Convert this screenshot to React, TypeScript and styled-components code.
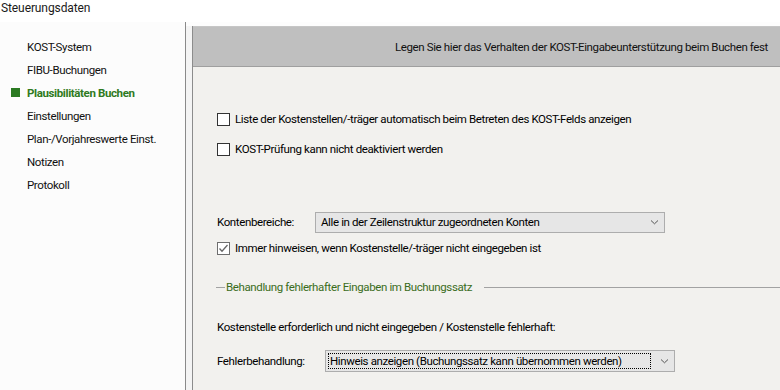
import React from "react";
import styled, { createGlobalStyle } from "styled-components";

const Global = createGlobalStyle`
  html, body { margin: 0; padding: 0; background: #ffffff; }
  body { font-family: Roboto, "Liberation Sans", Arial, sans-serif; }
  * { box-sizing: border-box; }
`;

const Window = styled.div`
  width: 780px;
  height: 390px;
  display: flex;
  flex-direction: column;
  background: #ffffff;
  overflow: hidden;
  color: #000;
  font-size: 11.5px;
  letter-spacing: -0.38px;
`;

const TitleBar = styled.div`
  height: 22px;
  display: flex;
  align-items: center;
  padding-left: 1px;
  padding-bottom: 6px;
  font-size: 12px;
  letter-spacing: -0.1px;
  color: #1a1a1a;
  background: #ffffff;
`;

const Body = styled.div`
  flex: 1;
  display: flex;
  min-height: 0;
`;

const Sidebar = styled.nav`
  width: 186px;
  flex: none;
  background: #fcfcfc;
  border-right: 1px solid #8a8a8a;
  padding-top: 13px;
  display: flex;
  flex-direction: column;
`;

const NavItem = styled.div<{ $active?: boolean }>`
  height: 23px;
  display: flex;
  align-items: center;
  padding-left: 11px;
  white-space: nowrap;
  font-weight: ${(p) => (p.$active ? 700 : 400)};
  color: ${(p) => (p.$active ? "#2f7a21" : "#111")};
`;

const Marker = styled.span<{ $active?: boolean }>`
  width: 9px;
  height: 9px;
  margin-right: 7px;
  flex: none;
  background: ${(p) => (p.$active ? "#2b7a22" : "transparent")};
`;

const Main = styled.div`
  flex: 1;
  display: flex;
  padding-left: 6px;
  padding-top: 4px;
  background: linear-gradient(#fdfdfd 0 4px, #f4f4f4 4px);
  min-width: 0;
`;

const Panel = styled.section`
  flex: 1;
  display: flex;
  flex-direction: column;
  background: #f2f1ee;
  border-left: 1px solid #8c8c8c;
  min-width: 0;
`;

const Header = styled.header`
  height: 41px;
  flex: none;
  display: flex;
  align-items: center;
  justify-content: flex-end;
  padding-right: 12px;
  background: #bfbfbf;
  border-top: 1px solid #c6c6c6;
  border-bottom: 1px solid #9f9f9f;
  color: #111;
`;

const Form = styled.div`
  display: flex;
  flex-direction: column;
  padding-left: 24px;
`;

const Row = styled.div<{ $top: number; $h?: number }>`
  margin-top: ${(p) => p.$top}px;
  height: ${(p) => p.$h ?? 18}px;
  display: flex;
  align-items: center;
  white-space: nowrap;
`;

const Box = styled.span<{ $checked?: boolean }>`
  width: 13px;
  height: 13px;
  flex: none;
  margin-right: 5px;
  background: #ffffff;
  border: 1px solid ${(p) => (p.$checked ? "#6e6e6e" : "#333333")};
  display: flex;
  align-items: center;
  justify-content: center;
`;

const Label = styled.span<{ $w: number }>`
  width: ${(p) => p.$w}px;
  flex: none;
`;

const Select = styled.div<{ $h: number }>`
  width: 350px;
  flex: none;
  height: ${(p) => p.$h}px;
  display: flex;
  align-items: center;
  background: #e6e6e6;
  border: 1px solid #adadad;
  padding: 0 0 0 2px;
`;

const SelectText = styled.span<{ $focus?: boolean }>`
  flex: 1;
  height: 16px;
  display: flex;
  align-items: center;
  padding-left: ${(p) => (p.$focus ? 1 : 2)}px;
  margin-right: 9px;
  border: 1px ${(p) => (p.$focus ? "dotted #000" : "solid transparent")};
`;

const Chevron = styled.svg`
  width: 9px;
  height: 6px;
  margin-right: 5px;
  flex: none;
`;

const Group = styled.div`
  margin-top: 21px;
  padding-left: 23px;
  height: 18px;
  display: flex;
  align-items: center;
  white-space: nowrap;
`;

const Dash = styled.span<{ $grow?: boolean }>`
  height: 1px;
  background: #a2a2a2;
  flex: ${(p) => (p.$grow ? "1" : "none")};
  width: ${(p) => (p.$grow ? "auto" : "9px")};
  margin-left: ${(p) => (p.$grow ? "12px" : "0")};
  margin-top: 1px;
`;

const GroupTitle = styled.span`
  color: #3b6d1c;
  padding-left: 1px;
`;

const Check = () => (
  <svg width="11" height="11" viewBox="0 0 11 11">
    <polyline points="1.5,5.5 4,8.2 9.5,2" fill="none" stroke="#666" strokeWidth="1.3" />
  </svg>
);

const Down = () => (
  <Chevron viewBox="0 0 9 6">
    <polyline points="1,1.5 4.5,4.8 8,1.5" fill="none" stroke="#555" strokeWidth="1" />
  </Chevron>
);

const nav = [
  "KOST-System",
  "FIBU-Buchungen",
  "Plausibilitäten Buchen",
  "Einstellungen",
  "Plan-/Vorjahreswerte Einst.",
  "Notizen",
  "Protokoll",
];

export default function App() {
  return (
    <>
      <Global />
      <Window>
        <TitleBar>Steuerungsdaten</TitleBar>
        <Body>
          <Sidebar>
            {nav.map((n, i) => (
              <NavItem key={n} $active={i === 2}>
                <Marker $active={i === 2} />
                {n}
              </NavItem>
            ))}
          </Sidebar>
          <Main>
            <Panel>
              <Header>Legen Sie hier das Verhalten der KOST-Eingabeunterstützung beim Buchen fest</Header>
              <Form>
                <Row $top={43}>
                  <Box />
                  Liste der Kostenstellen/-träger automatisch beim Betreten des KOST-Felds anzeigen
                </Row>
                <Row $top={12}>
                  <Box />
                  KOST-Prüfung kann nicht deaktiviert werden
                </Row>
                <Row $top={53} $h={22}>
                  <Label $w={98}>Kontenbereiche:</Label>
                  <Select $h={21}>
                    <SelectText>Alle in der Zeilenstruktur zugeordneten Konten</SelectText>
                    <Down />
                  </Select>
                </Row>
                <Row $top={6}>
                  <Box $checked>
                    <Check />
                  </Box>
                  Immer hinweisen, wenn Kostenstelle/-träger nicht eingegeben ist
                </Row>
              </Form>
              <Group>
                <Dash />
                <GroupTitle>Behandlung fehlerhafter Eingaben im Buchungssatz</GroupTitle>
                <Dash $grow />
              </Group>
              <Form>
                <Row $top={22}>Kostenstelle erforderlich und nicht eingegeben / Kostenstelle fehlerhaft:</Row>
                <Row $top={14} $h={22}>
                  <Label $w={108}>Fehlerbehandlung:</Label>
                  <Select $h={22}>
                    <SelectText $focus>Hinweis anzeigen (Buchungssatz kann übernommen werden)</SelectText>
                    <Down />
                  </Select>
                </Row>
              </Form>
            </Panel>
          </Main>
        </Body>
      </Window>
    </>
  );
}
